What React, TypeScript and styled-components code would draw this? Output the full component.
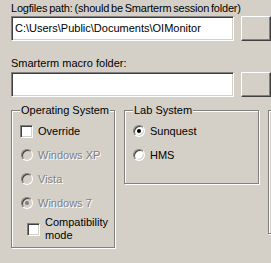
import styled, { createGlobalStyle } from 'styled-components'

const GlobalStyle = createGlobalStyle`
  html, body {
    margin: 0;
    padding: 0;
    background: #d4d0c8;
  }
  body {
    font-family: 'Liberation Sans', Arial, sans-serif;
    font-size: 11px;
    color: #000;
  }
`

const Window = styled.div`
  width: 271px;
  height: 263px;
  overflow: hidden;
  background: #d4d0c8;
  padding: 2px 0 0 11px;
  box-sizing: border-box;
`

const Label = styled.div<{ $gap?: number; $tight?: boolean }>`
  line-height: 13px;
  height: 13px;
  margin-top: ${(p) => p.$gap ?? 0}px;
  white-space: nowrap;
  letter-spacing: ${(p) => (p.$tight ? '-0.2px' : 'normal')};
  word-spacing: ${(p) => (p.$tight ? '-1px' : 'normal')};
`

const PathRow = styled.div<{ $gap?: number }>`
  display: flex;
  gap: 7px;
  margin-top: ${(p) => p.$gap ?? 0}px;
`

const TextBox = styled.div`
  width: 233px;
  height: 25px;
  box-sizing: border-box;
  background: #fff;
  border: 1px solid;
  border-color: #808080 #fff #fff #808080;
  box-shadow: inset 1px 1px #404040, inset -1px -1px #d4d0c8;
  padding: 0 3px;
  line-height: 23px;
  white-space: nowrap;
  overflow: hidden;
`

const Browse = styled.div`
  flex: none;
  width: 30px;
  height: 25px;
  box-sizing: border-box;
  background: #d4d0c8;
  border: 1px solid;
  border-color: #fff #404040 #404040 #fff;
  box-shadow: inset -1px -1px #808080;
`

const Groups = styled.div`
  display: flex;
  gap: 9px;
  margin-top: 13px;
`

const Group = styled.div<{ $w: number; $h: number }>`
  position: relative;
  flex: none;
  width: ${(p) => p.$w}px;
  height: ${(p) => p.$h}px;
  box-sizing: border-box;
  border: 1px solid #808080;
  box-shadow: inset 1px 1px #fff, 1px 1px #fff;
  padding: 8px 0 0 ${(p) => (p.$w > 120 ? 7 : 8)}px;
`

const Legend = styled.span`
  position: absolute;
  top: -7px;
  left: 8px;
  padding: 0 1px;
  line-height: 13px;
  background: #d4d0c8;
  white-space: nowrap;
`

const Option = styled.div<{ $indent?: number; $tall?: boolean }>`
  display: flex;
  align-items: center;
  gap: 5px;
  height: ${(p) => (p.$tall ? 28 : 24)}px;
  padding-left: ${(p) => p.$indent ?? 0}px;
`

const Caption = styled.span<{ $disabled?: boolean }>`
  line-height: 13px;
  white-space: nowrap;
  color: ${(p) => (p.$disabled ? '#808080' : '#000')};
  text-shadow: ${(p) => (p.$disabled ? '1px 1px #fff' : 'none')};
`

const Check = styled.span`
  flex: none;
  width: 13px;
  height: 13px;
  box-sizing: border-box;
  background: #fff;
  border: 1px solid;
  border-color: #808080 #fff #fff #808080;
  box-shadow: inset 1px 1px #404040, inset -1px -1px #d4d0c8;
`

const Radio = styled.span<{ $disabled?: boolean; $on?: boolean }>`
  position: relative;
  flex: none;
  width: 12px;
  height: 12px;
  margin-left: 1px;
  box-sizing: border-box;
  border-radius: 50%;
  background: ${(p) => (p.$disabled ? '#d4d0c8' : '#fff')};
  border: 1px solid;
  border-color: #808080 #fff #fff #808080;
  box-shadow: inset 1px 1px #404040, inset -1px -1px #d4d0c8;

  &::after {
    content: '';
    display: ${(p) => (p.$on ? 'block' : 'none')};
    position: absolute;
    left: 3px;
    top: 3px;
    width: 4px;
    height: 4px;
    border-radius: 50%;
    background: ${(p) => (p.$disabled ? '#808080' : '#000')};
  }
`

export default function App() {
  return (
    <>
      <GlobalStyle />
      <Window>
        <Label $tight>Logfiles path: (should be Smarterm session folder)</Label>
        <PathRow $gap={1}>
          <TextBox>C:\Users\Public\Documents\OIMonitor</TextBox>
          <Browse />
        </PathRow>
        <Label $gap={16}>Smarterm macro folder:</Label>
        <PathRow $gap={2}>
          <TextBox />
          <Browse />
        </PathRow>
        <Groups>
          <Group $w={104} $h={138}>
            <Legend>Operating System</Legend>
            <Option>
              <Check />
              <Caption>Override</Caption>
            </Option>
            <Option>
              <Radio $disabled />
              <Caption $disabled>Windows XP</Caption>
            </Option>
            <Option>
              <Radio $disabled />
              <Caption $disabled>Vista</Caption>
            </Option>
            <Option>
              <Radio $disabled $on />
              <Caption $disabled>Windows 7</Caption>
            </Option>
            <Option $indent={7} $tall>
              <Check />
              <Caption>
                Compatibility
                <br />
                mode
              </Caption>
            </Option>
          </Group>
          <Group $w={135} $h={74}>
            <Legend>Lab System</Legend>
            <Option>
              <Radio $on />
              <Caption>Sunquest</Caption>
            </Option>
            <Option>
              <Radio />
              <Caption>HMS</Caption>
            </Option>
          </Group>
          <Group $w={40} $h={124} />
        </Groups>
      </Window>
    </>
  )
}
